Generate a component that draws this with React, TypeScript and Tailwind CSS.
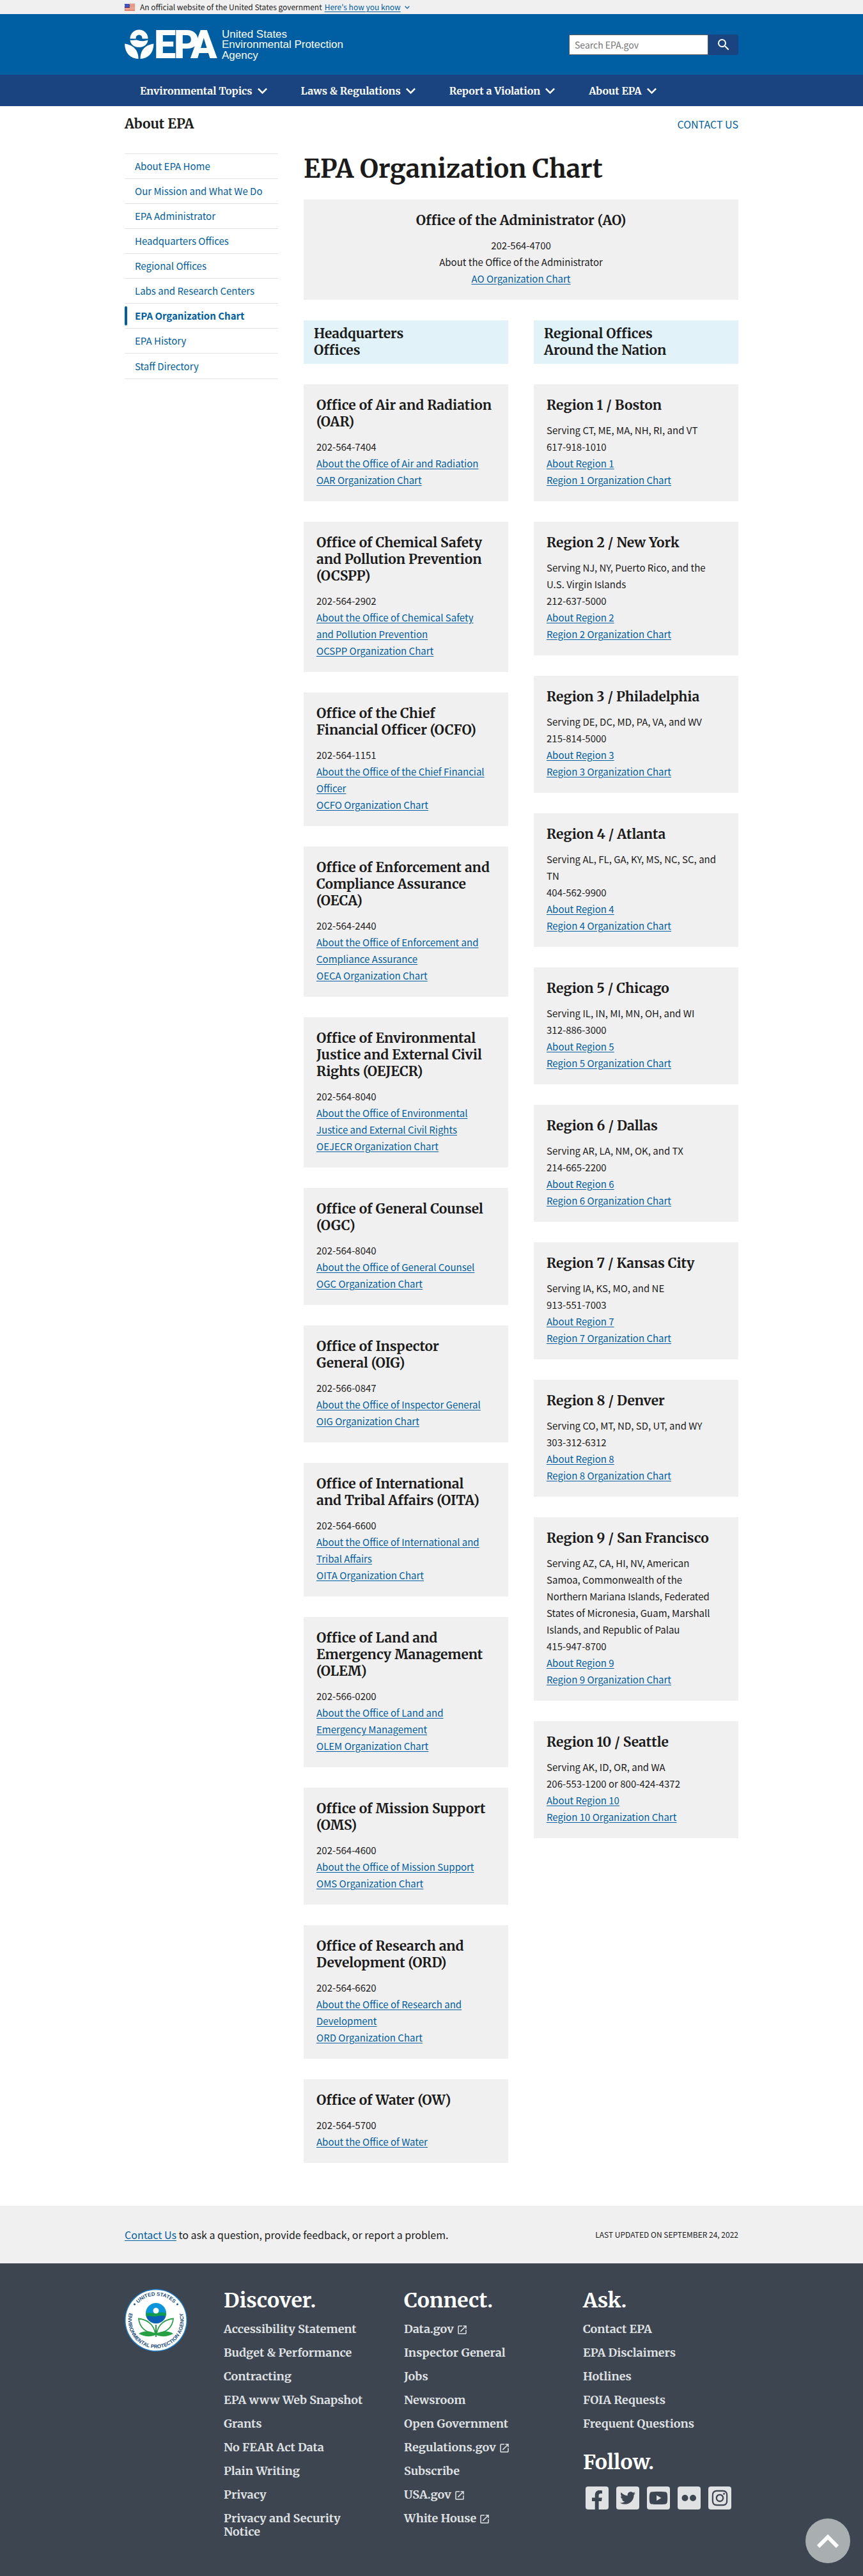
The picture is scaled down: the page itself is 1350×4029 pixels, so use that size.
import React from "react";
import { FaFacebookF, FaInstagram, FaTwitter, FaYoutube } from "react-icons/fa";
import { MdLaunch, MdSearch } from "react-icons/md";

const SERIF =
  "font-['Merriweather','DejaVu_Serif_Condensed','DejaVu_Serif',serif] font-bold";
const LINK = "text-[#005ea2] underline underline-offset-2";

type Office = {
  title: string;
  lines: string[];
  about: string;
  chart?: string;
};

const offices: Office[] = [
  { title: "Office of Air and Radiation (OAR)", lines: ["202-564-7404"], about: "About the Office of Air and Radiation", chart: "OAR Organization Chart" },
  { title: "Office of Chemical Safety and Pollution Prevention (OCSPP)", lines: ["202-564-2902"], about: "About the Office of Chemical Safety and Pollution Prevention", chart: "OCSPP Organization Chart" },
  { title: "Office of the Chief Financial Officer (OCFO)", lines: ["202-564-1151"], about: "About the Office of the Chief Financial Officer", chart: "OCFO Organization Chart" },
  { title: "Office of Enforcement and Compliance Assurance (OECA)", lines: ["202-564-2440"], about: "About the Office of Enforcement and Compliance Assurance", chart: "OECA Organization Chart" },
  { title: "Office of Environmental Justice and External Civil Rights (OEJECR)", lines: ["202-564-8040"], about: "About the Office of Environmental Justice and External Civil Rights", chart: "OEJECR Organization Chart" },
  { title: "Office of General Counsel (OGC)", lines: ["202-564-8040"], about: "About the Office of General Counsel", chart: "OGC Organization Chart" },
  { title: "Office of Inspector General (OIG)", lines: ["202-566-0847"], about: "About the Office of Inspector General", chart: "OIG Organization Chart" },
  { title: "Office of International and\u00a0Tribal Affairs (OITA)", lines: ["202-564-6600"], about: "About the Office of International and Tribal Affairs", chart: "OITA Organization Chart" },
  { title: "Office of Land and Emergency Management (OLEM)", lines: ["202-566-0200"], about: "About the Office of Land and Emergency Management", chart: "OLEM Organization Chart" },
  { title: "Office of Mission Support (OMS)", lines: ["202-564-4600"], about: "About the Office of Mission Support", chart: "OMS Organization Chart" },
  { title: "Office of Research and Development (ORD)", lines: ["202-564-6620"], about: "About the Office of Research and Development", chart: "ORD Organization Chart" },
  { title: "Office of Water (OW)", lines: ["202-564-5700"], about: "About the Office of Water" },
];

const regions: Office[] = [
  { title: "Region 1 / Boston", lines: ["Serving CT, ME, MA, NH, RI, and VT", "617-918-1010"], about: "About Region 1", chart: "Region 1 Organization Chart" },
  { title: "Region 2 / New York", lines: ["Serving NJ, NY, Puerto Rico, and the U.S.\u00a0Virgin Islands", "212-637-5000"], about: "About Region 2", chart: "Region 2 Organization Chart" },
  { title: "Region 3 / Philadelphia", lines: ["Serving DE, DC, MD, PA, VA, and WV", "215-814-5000"], about: "About Region 3", chart: "Region 3 Organization Chart" },
  { title: "Region 4 / Atlanta", lines: ["Serving AL, FL, GA, KY, MS, NC, SC, and TN", "404-562-9900"], about: "About Region 4", chart: "Region 4 Organization Chart" },
  { title: "Region 5 / Chicago", lines: ["Serving IL, IN, MI, MN, OH, and WI", "312-886-3000"], about: "About Region 5", chart: "Region 5 Organization Chart" },
  { title: "Region 6 / Dallas", lines: ["Serving AR, LA, NM, OK, and TX", "214-665-2200"], about: "About Region 6", chart: "Region 6 Organization Chart" },
  { title: "Region 7 / Kansas City", lines: ["Serving IA, KS, MO, and NE", "913-551-7003"], about: "About Region 7", chart: "Region 7 Organization Chart" },
  { title: "Region 8 / Denver", lines: ["Serving CO, MT, ND, SD, UT, and WY", "303-312-6312"], about: "About Region 8", chart: "Region 8 Organization Chart" },
  { title: "Region 9 / San Francisco", lines: ["Serving AZ, CA, HI, NV, American Samoa, Commonwealth of the Northern\u00a0Mariana Islands, Federated States\u00a0of Micronesia, Guam, Marshall Islands,\u00a0and Republic of Palau", "415-947-8700"], about: "About Region 9", chart: "Region 9 Organization Chart" },
  { title: "Region 10 / Seattle", lines: ["Serving AK, ID, OR, and WA", "206-553-1200 or 800-424-4372"], about: "About Region 10", chart: "Region 10 Organization Chart" },
];

const sideLinks = [
  "About EPA Home",
  "Our Mission and What We Do",
  "EPA Administrator",
  "Headquarters Offices",
  "Regional Offices",
  "Labs and Research Centers",
  "EPA Organization Chart",
  "EPA History",
  "Staff Directory",
];

const discover = ["Accessibility Statement", "Budget & Performance", "Contracting", "EPA www Web Snapshot", "Grants", "No FEAR Act Data", "Plain Writing", "Privacy", "Privacy and Security Notice"];
const connect = ["Data.gov", "Inspector General", "Jobs", "Newsroom", "Open Government", "Regulations.gov", "Subscribe", "USA.gov", "White House"];
const external = ["Data.gov", "Regulations.gov", "USA.gov", "White House"];
const ask = ["Contact EPA", "EPA Disclaimers", "Hotlines", "FOIA Requests", "Frequent Questions"];

function Wrap({ className = "", children }: { className?: string; children: React.ReactNode }) {
  return <div className={`mx-auto w-full max-w-5xl px-8 ${className}`}>{children}</div>;
}

function Chevron({ className }: { className: string }) {
  return (
    <svg viewBox="6 8 12 8" className={className} fill="currentColor" aria-hidden="true">
      <path d="M16.59 8.59 12 13.17 7.41 8.59 6 10l6 6 6-6z" />
    </svg>
  );
}

function Flag() {
  return (
    <svg viewBox="0 0 16 11" className="h-[11px] w-4" aria-hidden="true">
      <rect width="16" height="11" fill="#fff" />
      {[0, 2, 4, 6, 8, 10].map((y) => (
        <rect key={y} y={y} width="16" height="1" fill="#db3e1f" />
      ))}
      <rect width="8" height="6" fill="#1e33b1" />
      {[1, 3, 5].map((y) =>
        [1, 3, 5, 7].map((x) => <rect key={`${x}-${y}`} x={x - (y === 3 ? 1 : 0)} y={y - 0.5} width="0.8" height="0.8" fill="#fff" />)
      )}
    </svg>
  );
}

function Logo() {
  return (
    <svg viewBox="0 0 348 72" className="h-[72px] w-[348px] overflow-visible" role="img" aria-label="EPA, United States Environmental Protection Agency">
      <g fill="#fff">
        <path d="M8.500 26.500a14 14 0 0 1 28 0H27.400a5 5 0 1 0-9.800 0z" />
        <circle cx="22.500" cy="24.500" r="2.600" fill="#005ea2" />
        <path d="M8.500 28.500c5 1.500 8-1 12 .6 5 1.800 10 1.600 16-.6-.6 7-6.600 11.500-14 11.500s-13.400-4.500-14-11.500z" />
        <path d="M0 34.500c12 1.500 21.500 8.500 21.500 23.500C9 57.500.5 49.500 0 34.500z" />
        <path d="M45.500 34.500C33.500 36 24.500 43 24.500 58 36.500 57.500 45 49.500 45.500 34.500z" />
      </g>
      <g fill="#fff" fontFamily="Roboto, 'Liberation Sans', sans-serif" fontWeight="900" fontSize="61">
        <text x="46 77 103" y="57">EPA</text>
      </g>
      <g fill="#fff" fontFamily="'Liberation Sans', Arial, sans-serif" fontSize="17">
        <text x="152" y="25">United States</text>
        <text x="152" y="41">Environmental Protection</text>
        <text x="152" y="58">Agency</text>
      </g>
    </svg>
  );
}

function Seal() {
  return (
    <svg viewBox="0 0 98 98" className="size-[98px]" role="img" aria-label="United States Environmental Protection Agency seal">
      <defs>
        <path id="seal-top" d="M10.500 49a38.500 38.500 0 0 1 77 0" />
        <path id="seal-bottom" d="M9.500 31A43.500 43.500 0 1 0 88.500 31" />
        <clipPath id="seal-globe">
          <circle cx="49" cy="38" r="16" />
        </clipPath>
      </defs>
      <circle cx="49" cy="49" r="49" fill="#1b75bc" />
      <circle cx="49" cy="49" r="47.500" fill="#fff" />
      <g fill="#1c4f82" fontFamily="'Liberation Sans', Arial, sans-serif" fontSize="8" fontWeight="bold">
        <text textAnchor="middle">
          <textPath href="#seal-top" startOffset="50%">UNITED STATES</textPath>
        </text>
        <text textAnchor="middle">
          <textPath href="#seal-bottom" startOffset="50%">ENVIRONMENTAL PROTECTION AGENCY</textPath>
        </text>
        <circle cx="15.500" cy="24" r="1.500" />
        <circle cx="82.500" cy="24" r="1.500" />
      </g>
      <g clipPath="url(#seal-globe)">
        <rect x="33" y="22" width="32" height="32" fill="#0a95dd" />
        <path d="M33 38c6-2 9 1 16 0s10-2 16 0v7H33z" fill="#119b4c" />
        <path d="M33 43c6-2 10 1 16 0s10-2 16 0v12H33z" fill="#0b5fb5" />
      </g>
      <circle cx="49" cy="34" r="4.500" fill="#fff" />
      <g fill="#fff" stroke="#27a043" strokeWidth="1.800">
        <path d="M48 70C46 56 36 48 22 46.500 23 60 33 69 48 70z" />
        <path d="M50 70C52 56 62 48 76 46.500 75 60 65 69 50 70z" />
      </g>
      <path d="M48 56h2v19h-2z" fill="#27a043" />
      <path d="M22 70c8-5 20-5 27 1 7-6 19-6 27-1-8 5-20 5.500-27 1.500C42 75.500 30 75 22 70z" fill="#27a043" />
    </svg>
  );
}

function Lines({ office }: { office: Office }) {
  return (
    <p className="pr-2">
      {office.lines.map((l) => (
        <span key={l} className="block">{l}</span>
      ))}
      <a href="#" className={LINK}>{office.about}</a>
      {office.chart && (
        <>
          <br />
          <a href="#" className={LINK}>{office.chart}</a>
        </>
      )}
    </p>
  );
}

function Column({ heading, items }: { heading: React.ReactNode; items: Office[] }) {
  return (
    <section className="flex flex-col gap-8">
      <h2 className={`${SERIF} bg-[#e1f3f8] px-4 py-2 text-[21px] leading-[26px]`}>{heading}</h2>
      {items.map((o) => (
        <article key={o.title} className="bg-[#f0f0f0] p-5">
          <h3 className={`${SERIF} mb-[13px] pr-1 text-[21px] leading-[26px]`}>{o.title}</h3>
          <Lines office={o} />
        </article>
      ))}
    </section>
  );
}

function FooterList({ title, items }: { title: string; items: string[] }) {
  return (
    <div className="pr-12">
      <h2 className="mb-4 text-[32px] leading-9 text-white">{title}</h2>
      <ul className="flex flex-col gap-4">
        {items.map((t) => (
          <li key={t}>
            <a href="#">
              {t}
              {external.includes(t) && <MdLaunch className="ml-1 inline size-[18px] align-[-4px]" aria-label="(external link)" />}
            </a>
          </li>
        ))}
      </ul>
    </div>
  );
}

function Flickr() {
  return (
    <svg viewBox="0 0 36 36" className="size-9" fill="currentColor" aria-hidden="true">
      <circle cx="11.500" cy="18" r="5" />
      <circle cx="24" cy="18" r="5" />
    </svg>
  );
}

const social = [
  { name: "Facebook", icon: <FaFacebookF className="mt-1.5 h-[30px] w-auto" /> },
  { name: "Twitter", icon: <FaTwitter className="size-6" /> },
  { name: "YouTube", icon: <FaYoutube className="size-[30px]" /> },
  { name: "Flickr", icon: <Flickr /> },
  { name: "Instagram", icon: <FaInstagram className="size-7" /> },
];

export default function App() {
  return (
    <div className="relative bg-white font-['Noto_Sans_CJK_SC','Open_Sans',sans-serif] text-[15px] leading-[26px] text-[#1b1b1b]">
      <div className="bg-[#f0f0f0]">
        <Wrap className="flex h-[22px] items-center text-xs">
          <Flag />
          <span className="ml-2">An official website of the United States government</span>
          <button type="button" className="ml-1 flex items-center gap-1.5 text-[#005ea2]">
            <span className="underline underline-offset-2">Here's how you know</span>
            <Chevron className="h-[5px] w-2" />
          </button>
        </Wrap>
      </div>

      <header>
        <div className="bg-[#005ea2]">
          <Wrap className="flex h-[95px] items-start justify-between">
            <a href="#" className="mt-3"><Logo /></a>
            <form className="mt-8 flex" role="search">
              <label htmlFor="q" className="sr-only">Search</label>
              <input id="q" type="text" placeholder="Search EPA.gov" className="h-8 w-[218px] border border-[#565c65] bg-white px-2 text-sm leading-7 placeholder:text-[#757575]" />
              <button type="submit" aria-label="Search" className="flex h-8 w-[47px] items-center justify-center rounded-r bg-[#1a4480] text-white">
                <MdSearch className="size-6" />
              </button>
            </form>
          </Wrap>
        </div>
        <nav className="bg-[#1a4480]" aria-label="Primary">
          <Wrap>
            <ul className={`${SERIF} flex h-[49px] items-center gap-[53px] px-6 text-base text-white`}>
              {["Environmental Topics", "Laws & Regulations", "Report a Violation", "About EPA"].map((t) => (
                <li key={t}>
                  <button type="button" className="flex items-center gap-2">
                    {t}
                    <Chevron className="h-2.5 w-[15px]" />
                  </button>
                </li>
              ))}
            </ul>
          </Wrap>
        </nav>
      </header>

      <Wrap>
        <div className="flex h-14 items-center justify-between">
          <h2 className={`${SERIF} text-[21px]`}>About EPA</h2>
          <a href="#" className="text-base text-[#005ea2]">CONTACT US</a>
        </div>
        <div className="flex items-start gap-10 pt-[18px] pb-[67px]">
          <nav className="w-60 shrink-0" aria-label="Side navigation">
            <ul className="border-y border-[#dfe1e2]">
              {sideLinks.map((t) => {
                const current = t === "EPA Organization Chart";
                return (
                  <li key={t} className="flex h-[39px] items-center border-b border-[#dfe1e2] last:border-b-0">
                    {current && <span className="h-[30px] w-1 rounded-full bg-[#005ea2]" />}
                    <a href="#" className={current ? "pl-3 font-bold text-[#005ea2]" : "pl-4 text-[#005ea2]"}>{t}</a>
                  </li>
                );
              })}
            </ul>
          </nav>
          <main className="min-w-0 flex-1">
            <h1 className={`${SERIF} mb-6 text-[40px] leading-[48px]`}>EPA Organization Chart</h1>
            <section className="mb-8 bg-[#f0f0f0] p-5 text-center">
              <h2 className={`${SERIF} mb-[13px] text-[21px] leading-[26px]`}>Office of the Administrator (AO)</h2>
              <p>
                202-564-4700
                <br />
                About the Office of the Administrator
                <br />
                <a href="#" className={LINK}>AO Organization Chart</a>
              </p>
            </section>
            <div className="grid grid-cols-2 items-start gap-10">
              <Column heading={<>Headquarters<br />Offices</>} items={offices} />
              <Column heading={<>Regional Offices<br />Around the Nation</>} items={regions} />
            </div>
          </main>
        </div>
      </Wrap>

      <div className="bg-[#f0f0f0]">
        <Wrap className="flex h-[90px] items-center justify-between">
          <p className="text-base">
            <a href="#" className={LINK}>Contact Us</a> to ask a question, provide feedback, or report a problem.
          </p>
          <p className="text-xs">LAST UPDATED ON SEPTEMBER 24, 2022</p>
        </Wrap>
      </div>

      <footer className="bg-[#3d4551]">
        <Wrap className={`${SERIF} grid grid-cols-[155px_282px_280px_1fr] items-start pt-10 pb-[59px] text-lg leading-[21px] text-[#dfe1e2]`}>
          <Seal />
          <FooterList title="Discover." items={discover} />
          <FooterList title="Connect." items={connect} />
          <div>
            <FooterList title="Ask." items={ask} />
            <h2 className="mt-8 mb-5 text-[32px] leading-9 text-white">Follow.</h2>
            <ul className="flex gap-3 pl-1">
              {social.map((s) => (
                <li key={s.name}>
                  <a href="#" aria-label={s.name} className="flex size-9 items-center justify-center overflow-hidden rounded bg-[#dfe1e2] text-[#3d4551]">
                    {s.icon}
                  </a>
                </li>
              ))}
            </ul>
          </div>
        </Wrap>
      </footer>

      <a href="#" aria-label="Back to top" className="absolute right-5 bottom-5 flex size-[70px] items-center justify-center rounded-full bg-[#a9aeb1] text-white">
        <svg viewBox="0 0 34 22" className="h-[22px] w-[34px]" fill="none" stroke="currentColor" strokeWidth="6" aria-hidden="true">
          <path d="M2 20 17 5l15 15" />
        </svg>
      </a>
    </div>
  );
}
